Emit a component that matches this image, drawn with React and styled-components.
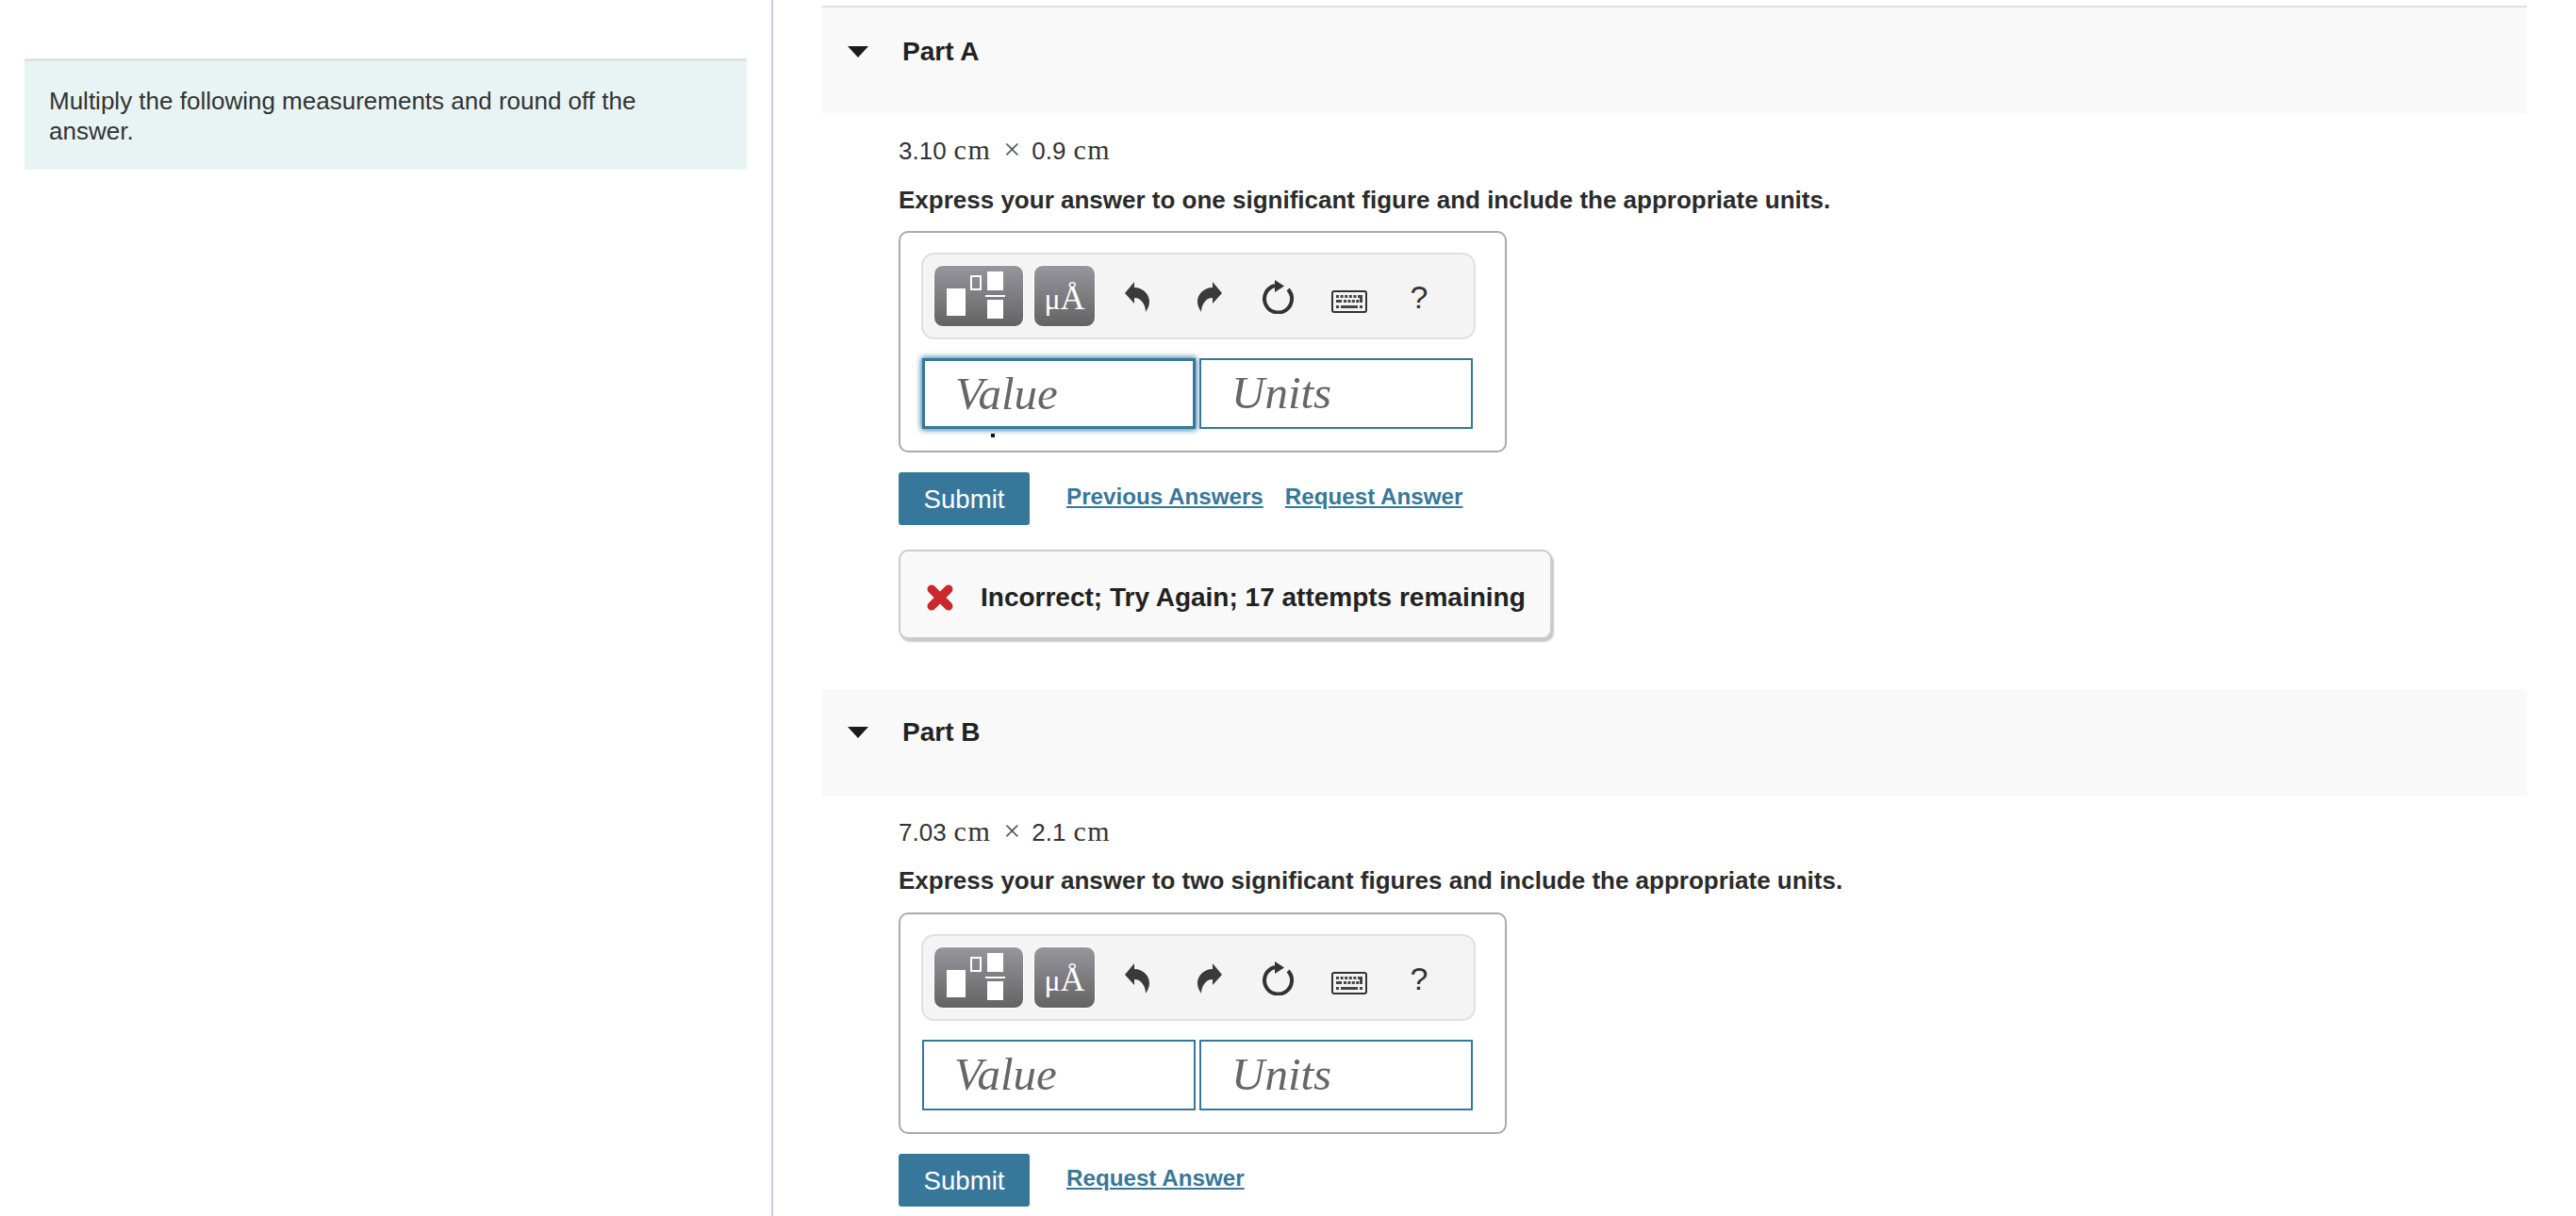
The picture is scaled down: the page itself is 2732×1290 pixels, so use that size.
import styled, { createGlobalStyle } from "styled-components";

const TEAL = "#37789a";
const SANS = '"Liberation Sans", Arial, sans-serif';
const SERIF = '"Liberation Serif", "Times New Roman", serif';

const parts = [
  {
    name: "Part A",
    ruled: true,
    a: "3.10",
    b: "0.9",
    hint: "Express your answer to one significant figure and include the appropriate units.",
    focused: true,
    previous: true,
    feedback: "Incorrect; Try Again; 17 attempts remaining",
  },
  {
    name: "Part B",
    a: "7.03",
    b: "2.1",
    hint: "Express your answer to two significant figures and include the appropriate units.",
  },
];

function TemplateIcon() {
  return (
    <svg width="68" height="52" viewBox="0 0 68 52">
      <rect x="0" y="18" width="20" height="29" fill="#fff" />
      <rect x="26" y="5" width="10" height="14" fill="none" stroke="#fff" strokeWidth="2" />
      <rect x="43" y="0" width="17" height="20" fill="#fff" />
      <rect x="41" y="25" width="21" height="2" fill="#fff" />
      <rect x="43" y="30" width="17" height="20" fill="#fff" />
    </svg>
  );
}

function UndoIcon({ flip }) {
  return (
    <svg width="28" height="32" viewBox="0 0 28 32" style={flip ? { transform: "scaleX(-1)" } : undefined}>
      <path
        d="M1 12 L11 0 V6 C20 6 27 13 27 21 C27 25 25 29 23 32 C23 25 19 17 11 17 V23 Z"
        fill="#3a3a3a"
      />
    </svg>
  );
}

function ResetIcon() {
  return (
    <svg width="34" height="36" viewBox="0 0 34 36">
      <path d="M27 10 A14.5 14.5 0 1 1 13 6" fill="none" stroke="#333" strokeWidth="4" />
      <path d="M13 0 L23 6.5 L13 13 Z" fill="#333" />
    </svg>
  );
}

function KeyboardIcon() {
  return (
    <svg width="38" height="24" viewBox="0 0 38 24">
      <rect x="1" y="1" width="36" height="22" rx="2" fill="#f4f4f4" stroke="#333" strokeWidth="2" />
      {[0, 1, 2, 3, 4, 5].map((i) => (
        <rect key={i} x={5 + i * 4.6} y="5" width="3" height="3" fill="#444" />
      ))}
      <rect x="5" y="10" width="6" height="3" fill="#444" />
      {[0, 1, 2, 3].map((i) => (
        <rect key={i} x={13 + i * 4.4} y="10" width="3" height="3" fill="#444" />
      ))}
      <rect x="30" y="5" width="3" height="8" fill="#444" />
      <rect x="5" y="16" width="3" height="3" fill="#444" />
      <rect x="10" y="16" width="18" height="3" fill="#444" />
      <rect x="30" y="16" width="3" height="3" fill="#444" />
    </svg>
  );
}

function CrossIcon() {
  return (
    <svg width="30" height="28" viewBox="0 0 30 28">
      <path d="M6 5 L24 23 M24 5 L6 23" stroke="#c9282d" strokeWidth="9" strokeLinecap="round" />
    </svg>
  );
}

function Answer({ focused, tight }) {
  return (
    <AnswerBox $tight={tight}>
      <Toolbar>
        <PaletteButton $width={96}>
          <TemplateIcon />
        </PaletteButton>
        <PaletteButton $width={66}>
          <UnitGlyph>
            μ<Angstrom>Å</Angstrom>
          </UnitGlyph>
        </PaletteButton>
        <ToolSlot $width={78} $first>
          <UndoIcon />
        </ToolSlot>
        <ToolSlot $width={76}>
          <UndoIcon flip />
        </ToolSlot>
        <ToolSlot $width={70}>
          <ResetIcon />
        </ToolSlot>
        <ToolSlot $width={79} $drop={11}>
          <KeyboardIcon />
        </ToolSlot>
        <ToolSlot $width={70}>
          <Help>?</Help>
        </ToolSlot>
      </Toolbar>
      <Inputs>
        <Field $focused={focused}>Value</Field>
        <Field>Units</Field>
        {focused && <Speck />}
      </Inputs>
    </AnswerBox>
  );
}

function Part({ part }) {
  const tight = !part.ruled;
  return (
    <section>
      <PartHeader $ruled={part.ruled}>
        <Caret />
        <PartName>{part.name}</PartName>
      </PartHeader>
      <PartBody>
        <Expression $tight={tight}>
          {part.a}
          <Unit>cm</Unit>
          <Times>×</Times>
          {part.b}
          <Unit>cm</Unit>
        </Expression>
        <Hint $tight={tight}>{part.hint}</Hint>
        <Answer focused={part.focused} tight={tight} />
        <Actions>
          <Submit>Submit</Submit>
          <Links>
            {part.previous && <LinkText>Previous Answers</LinkText>}
            <LinkText>Request Answer</LinkText>
          </Links>
        </Actions>
        {part.feedback && (
          <Feedback>
            <CrossIcon />
            <span>{part.feedback}</span>
          </Feedback>
        )}
      </PartBody>
    </section>
  );
}

export default function App() {
  return (
    <>
      <GlobalStyle />
      <Page>
        <Sidebar>
          <Intro>Multiply the following measurements and round off the answer.</Intro>
        </Sidebar>
        <Main>
          {parts.map((part) => (
            <Part key={part.name} part={part} />
          ))}
        </Main>
      </Page>
    </>
  );
}

const GlobalStyle = createGlobalStyle`
  html, body {
    margin: 0;
    height: 1290px;
    overflow: hidden;
    background: #fff;
  }
  * {
    box-sizing: border-box;
  }
`;

const Page = styled.div`
  display: flex;
  height: 1290px;
  overflow: hidden;
  font-family: ${SANS};
  color: #222;
`;

const Sidebar = styled.aside`
  width: 820px;
  flex: none;
  padding: 62px 26px 0 26px;
  border-right: 2px solid #c3d1df;
`;

const Intro = styled.div`
  height: 118px;
  padding: 26px 26px 0;
  background: #e8f4f4;
  border-top: 3px solid #e0e2e2;
  font-size: 26px;
  line-height: 32px;
  color: #333;
`;

const Main = styled.main`
  flex: 1;
  display: flex;
  flex-direction: column;
  gap: 53px;
  padding: 6px 52px 0 52px;
`;

const PartHeader = styled.div`
  height: ${({ $ruled }) => ($ruled ? "114px" : "113px")};
  display: flex;
  align-items: flex-start;
  padding-top: ${({ $ruled }) => ($ruled ? "31px" : "30px")};
  background: #f9f9f9;
  border-top: ${({ $ruled }) => ($ruled ? "2px solid #e0e0e0" : "none")};
`;

const Caret = styled.span`
  width: 0;
  height: 0;
  margin: 10px 36px 0 27px;
  border-left: 11px solid transparent;
  border-right: 11px solid transparent;
  border-top: 12px solid #1c1c1c;
`;

const PartName = styled.h2`
  margin: 0;
  font-size: 28px;
  line-height: 32px;
  font-weight: 700;
  color: #222;
`;

const PartBody = styled.div`
  padding-left: 81px;
`;

const Expression = styled.div`
  height: 32px;
  margin-top: ${({ $tight }) => ($tight ? "21px" : "22px")};
  font-size: 26px;
  line-height: 28px;
  color: #333;
`;

const Unit = styled.span`
  margin-left: 8px;
  font-family: ${SERIF};
  font-size: 30px;
  line-height: 1;
  letter-spacing: 1.5px;
`;

const Times = styled.span`
  margin: 0 12px 0 13px;
  font-family: ${SERIF};
  font-size: 32px;
  line-height: 1;
  color: #555;
`;

const Hint = styled.p`
  margin: ${({ $tight }) => ($tight ? "21px" : "22px")} 0 0;
  font-size: 26px;
  line-height: 32px;
  font-weight: 700;
  color: #2b2b2b;
`;

const AnswerBox = styled.div`
  width: 645px;
  height: 235px;
  margin-top: ${({ $tight }) => ($tight ? "18px" : "17px")};
  padding: 21px 22px 0;
  border: 2px solid #aaa;
  border-radius: 10px;
`;

const Toolbar = styled.div`
  width: 588px;
  height: 92px;
  display: flex;
  align-items: center;
  padding-left: 11px;
  gap: 10px;
  background: #f4f4f4;
  border: 2px solid #e0e0e0;
  border-radius: 14px;
`;

const PaletteButton = styled.div`
  width: ${({ $width }) => $width}px;
  height: 66px;
  flex: none;
  display: flex;
  align-items: center;
  justify-content: center;
  border: 1px solid #fff;
  border-radius: 10px;
  background: linear-gradient(#98969e, #636363);
`;

const UnitGlyph = styled.span`
  font-family: ${SERIF};
  font-size: 32px;
  line-height: 60px;
  margin-top: 4px;
  color: #fff;
`;

const Angstrom = styled.span`
  font-size: 36px;
`;

const ToolSlot = styled.div`
  width: ${({ $width }) => $width}px;
  flex: none;
  display: flex;
  justify-content: center;
  margin-top: ${({ $drop }) => $drop || 2}px;
  margin-left: ${({ $first }) => ($first ? "-5px" : "-10px")};
`;

const Help = styled.span`
  font-size: 34px;
  line-height: 40px;
  color: #333;
`;

const Inputs = styled.div`
  position: relative;
  display: flex;
  gap: 4px;
  margin-top: 20px;
  padding-left: 1px;
`;

const Field = styled.div`
  width: 290px;
  height: 75px;
  padding-left: 32px;
  font-family: ${SERIF};
  font-style: italic;
  font-size: 49px;
  line-height: 69px;
  color: #666;
  border: ${({ $focused }) => ($focused ? "3px" : "2px")} solid ${TEAL};
  box-shadow: ${({ $focused }) => ($focused ? `0 0 6px 1px ${TEAL}` : "none")};
`;

const Speck = styled.i`
  position: absolute;
  left: 74px;
  top: 80px;
  width: 4px;
  height: 4px;
  background: #111;
`;

const Actions = styled.div`
  display: flex;
  align-items: flex-start;
  margin-top: 21px;
`;

const Submit = styled.button`
  width: 139px;
  height: 56px;
  padding: 1px 0 0;
  border: none;
  border-radius: 3px;
  background: ${TEAL};
  color: #fff;
  font-family: ${SANS};
  font-size: 27.6px;
`;

const Links = styled.div`
  display: flex;
  gap: 23px;
  margin: 10px 0 0 39px;
`;

const LinkText = styled.a`
  font-size: 24.2px;
  line-height: 32px;
  font-weight: 700;
  color: ${TEAL};
  text-decoration: underline;
`;

const Feedback = styled.div`
  width: 693px;
  height: 95px;
  margin-top: 26px;
  display: flex;
  align-items: center;
  gap: 28px;
  padding: 6px 0 0 27px;
  background: #f9f9f9;
  border: 2px solid #ccc;
  border-radius: 10px;
  box-shadow: 2px 3px 2px #c8c8c8;
  font-size: 28px;
  font-weight: 700;
  color: #222;
`;
